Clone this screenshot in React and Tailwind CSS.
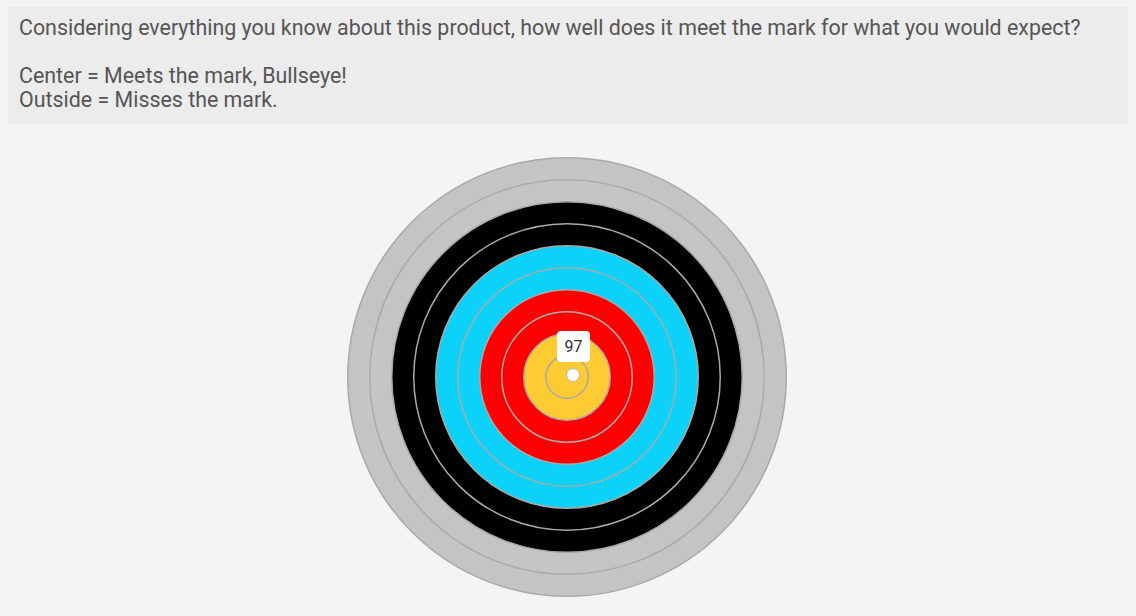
import React from 'react';

const rings = [
  { r: 220, fill: '#c4c5c2' },
  { r: 198, fill: '#c4c5c2' },
  { r: 176, fill: '#000000' },
  { r: 154, fill: '#000000' },
  { r: 132, fill: '#0cd2fa' },
  { r: 110, fill: '#0cd2fa' },
  { r: 88, fill: '#ff0000' },
  { r: 66, fill: '#ff0000' },
  { r: 44, fill: '#ffcb33' },
  { r: 22, fill: '#ffcb33' },
];

function Target() {
  const c = 223;
  return (
    <svg width="446" height="446" viewBox="0 0 446 446" className="block">
      {rings.map((ring) => (
        <circle
          key={ring.r}
          cx={c}
          cy={c}
          r={ring.r - 0.75}
          fill={ring.fill}
          stroke="#a9aaa8"
          strokeWidth="1.5"
        />
      ))}
      <circle cx={c + 6} cy={c - 2} r="6.5" fill="#ffffff" stroke="#b5b5b5" strokeWidth="1" />
    </svg>
  );
}

export default function App() {
  return (
    <div
      className="w-full h-[616px] bg-[#f4f4f4] pt-[7px] overflow-hidden"
      style={{ fontFamily: 'Roboto, "Liberation Sans", sans-serif' }}
    >
      <div className="mx-2 bg-[#ececec] pl-[11px] pt-[9px] pb-[12px] text-[21.4px] leading-[24px] text-[#555555]">
        <p>Considering everything you know about this product, how well does it meet the mark for what you would expect?</p>
        <p className="mt-[24px]">Center = Meets the mark, Bullseye!</p>
        <p>Outside = Misses the mark.</p>
      </div>
      <div className="flex justify-center mt-[30px] pr-[2px]">
        <div className="relative">
          <Target />
          <div className="absolute left-[213px] top-[177px] w-[33px] h-[31px] rounded-[4px] bg-white flex items-center justify-center text-[16px] text-[#333333]">
            97
          </div>
        </div>
      </div>
    </div>
  );
}
